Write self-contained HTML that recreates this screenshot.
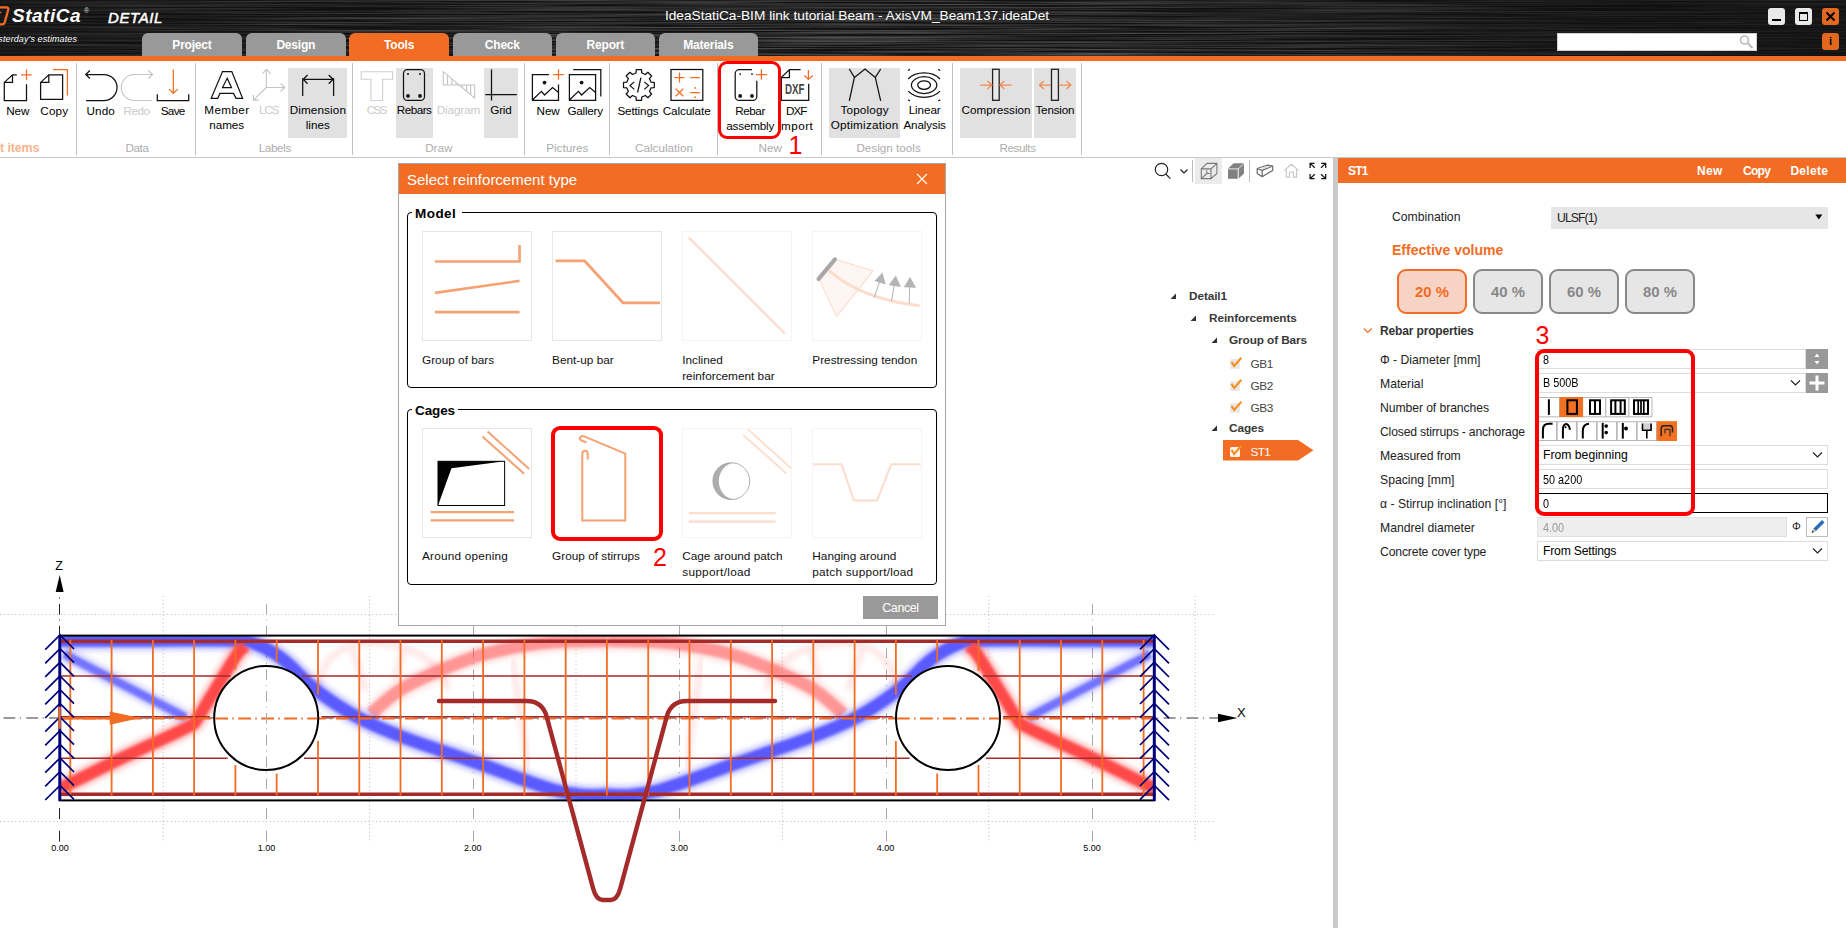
<!DOCTYPE html>
<html lang="en">
<head>
<meta charset="utf-8">
<title>IDEA StatiCa Detail</title>
<style>
*{box-sizing:border-box;margin:0;padding:0}
html,body{width:1846px;height:928px;overflow:hidden;background:#fff}
body{font-family:"Liberation Sans",sans-serif;font-size:12px;color:#000;position:relative}
.abs{position:absolute}
#titlebar{position:absolute;left:0;top:0;width:1846px;height:56px;background:#0c0c0c;overflow:hidden}
#ostripe{position:absolute;left:0;top:56px;width:1846px;height:5px;background:#f26c23}
.tab{position:absolute;top:33px;height:23px;width:99.6px;background:#999;color:#fff;border-radius:6px 6px 0 0;
 font-weight:bold;font-size:12px;text-align:center;line-height:24px;letter-spacing:-0.2px}
.tab.act{background:#f26c23}
#ribbon{position:absolute;left:0;top:61px;width:1846px;height:97px;background:#fff;border-bottom:1px solid #c8c8c8}
.sep{position:absolute;top:63px;width:1px;height:92px;background:#c0c0c0}
.glab{position:absolute;top:140px;font-size:12px;color:#a9a9a9;text-align:center;white-space:nowrap;transform:translateX(-50%)}
.rb{position:absolute;top:68px;height:70px;text-align:center;font-size:12px;line-height:15px;white-space:nowrap}
.rb.hl{background:#e2e2e2}
.rb span{position:absolute;left:50%;transform:translateX(-50%);top:34px}
.rb.dis span{color:#c9c9c9}
.rb svg{position:absolute;left:0;top:0;overflow:visible}
.rl{position:absolute;transform:translateX(-50%);text-align:center;font-size:11.7px;line-height:15.2px;white-space:nowrap;color:#000}
.rl.dis{color:#cacaca}
.gl{position:absolute;top:141px;transform:translateX(-50%);font-size:11.7px;color:#adadad;white-space:nowrap;line-height:14px}
.tb{position:absolute;margin-top:1px;font-weight:bold;font-size:11.8px;line-height:15px;white-space:nowrap;color:#383838;letter-spacing:-0.1px}
.tn{position:absolute;margin-top:1px;font-size:11.8px;line-height:15px;white-space:nowrap;color:#444}
.dl{position:absolute;font-size:11.8px;line-height:16px;white-space:nowrap;color:#111}
.ph{position:absolute;top:163.5px;font-weight:bold;font-size:12px;line-height:15px;color:#fff;white-space:nowrap}
.pl{position:absolute;font-size:12.2px;line-height:15px;white-space:nowrap;color:#222}
</style>
</head>
<body>
<div id="titlebar"><svg width="1846" height="56" style="position:absolute;left:0;top:0"><defs><filter id="br" x="0" y="0" width="100%" height="100%" color-interpolation-filters="sRGB"><feTurbulence type="fractalNoise" baseFrequency="0.004 0.7" numOctaves="3" seed="7" result="n"/><feColorMatrix in="n" type="matrix" values="0 0 0 0 1  0 0 0 0 1  0 0 0 0 1  0.55 0 0 0 -0.18"/></filter><linearGradient id="tg" x1="0" x2="1" y1="0" y2="0"><stop offset="0" stop-color="#fff" stop-opacity="0.4"/><stop offset="0.1" stop-color="#fff" stop-opacity="0.6"/><stop offset="0.3" stop-color="#fff" stop-opacity="1"/><stop offset="0.62" stop-color="#fff" stop-opacity="1"/><stop offset="0.8" stop-color="#fff" stop-opacity="0.5"/><stop offset="1" stop-color="#fff" stop-opacity="0.3"/></linearGradient><mask id="tm"><rect width="1846" height="56" fill="url(#tg)"/></mask></defs><rect width="1846" height="56" fill="#101010"/><g mask="url(#tm)"><rect width="1846" height="56" fill="#fff" filter="url(#br)"/></g></svg></div>
<div id="ostripe"></div>
<svg class="abs" style="left:0;top:0" width="14" height="30"><path d="M-2 7.4H6.2Q8.9 7.4 8.2 10L4.6 22.6Q4 24.4 2 24.4H-2" stroke="#f26c23" stroke-width="2.3" fill="none"/><path d="M-1 12.5H1.2" stroke="#f26c23" stroke-width="1.5"/></svg>
<div class="abs" style="left:12px;top:5.4px;font:italic bold 19px 'Liberation Sans',sans-serif;color:#fff;white-space:nowrap;letter-spacing:0.5px">StatiCa</div>
<div class="abs" style="left:84px;top:7px;font:7px 'Liberation Sans',sans-serif;color:#ddd">®</div>
<div class="abs" style="left:108px;top:9px;font:italic 15px 'Liberation Sans',sans-serif;color:#fff;letter-spacing:0.6px;-webkit-text-stroke:0.5px #fff">DETAIL</div>
<div class="abs" style="right:1769px;top:34.2px;font:italic 9px 'Liberation Sans',sans-serif;color:#fff;white-space:nowrap;letter-spacing:0.1px">Calculate yesterday's estimates</div>
<div class="abs" style="left:557px;width:600px;top:7.5px;text-align:center;font:13.7px 'Liberation Sans',sans-serif;color:#fff;white-space:nowrap" id="wtitle">IdeaStatiCa-BIM link tutorial Beam - AxisVM_Beam137.ideaDet</div>
<div class="abs" style="left:1768px;top:8px;width:17px;height:17px;background:#e9e9e9;border-radius:3px"><div class="abs" style="left:4px;top:11px;width:9px;height:2px;background:#000"></div></div>
<div class="abs" style="left:1795px;top:8px;width:17px;height:17px;background:#e9e9e9;border-radius:3px"><div class="abs" style="left:4px;top:4px;width:9px;height:9px;border:1px solid #000;border-top-width:2px"></div></div>
<div class="abs" style="left:1822px;top:8px;width:17px;height:17px;background:#e3681f;border-radius:3px"><svg width="17" height="17" style="position:absolute;left:0;top:0"><path d="M4.5 4.5 L12.5 12.5 M12.5 4.5 L4.5 12.5" stroke="#000" stroke-width="2"/></svg></div>
<div class="abs" style="left:1557px;top:33px;width:200px;height:18px;background:#fff;border:1px solid #d0d0d0"><svg width="20" height="18" style="position:absolute;left:179px;top:-1px"><circle cx="7.5" cy="7" r="4" fill="none" stroke="#bbb" stroke-width="1.6"/><path d="M10.5 10 L15.5 15" stroke="#bbb" stroke-width="2"/></svg></div>
<div class="abs" style="left:1822px;top:33px;width:17px;height:17px;background:#e3681f;border-radius:3px;color:#000;font:bold 11px 'Liberation Sans',sans-serif;text-align:center;line-height:17px">i</div>

<div class="tab" style="left:142.2px">Project</div>
<div class="tab" style="left:246.0px">Design</div>
<div class="tab act" style="left:349.3px">Tools</div>
<div class="tab" style="left:452.5px">Check</div>
<div class="tab" style="left:555.5px">Report</div>
<div class="tab" style="left:658.5px">Materials</div>

<div id="ribbon"></div>
<!--RIBBON_START-->
<div class="abs" style="left:288px;top:68px;width:59px;height:70px;background:#e1e1e1"></div>
<div class="abs" style="left:396px;top:68px;width:37px;height:70px;background:#e1e1e1"></div>
<div class="abs" style="left:484px;top:68px;width:34px;height:70px;background:#e1e1e1"></div>
<div class="abs" style="left:829px;top:68px;width:71px;height:70px;background:#e1e1e1"></div>
<div class="abs" style="left:960px;top:68px;width:72px;height:70px;background:#e1e1e1"></div>
<div class="abs" style="left:1034px;top:68px;width:42px;height:70px;background:#e1e1e1"></div>
<div class="sep" style="left:76px"></div>
<div class="sep" style="left:195px"></div>
<div class="sep" style="left:352px"></div>
<div class="sep" style="left:524px"></div>
<div class="sep" style="left:609px"></div>
<div class="sep" style="left:717px"></div>
<div class="sep" style="left:821px"></div>
<div class="sep" style="left:952px"></div>
<div class="sep" style="left:1081px"></div>
<div class="rl" style="left:17.8px;top:103px"><span style="letter-spacing:-0.07px;margin-right:0.07px">New</span></div>
<div class="rl" style="left:54.2px;top:103px"><span style="letter-spacing:0.15px;margin-right:-0.15px">Copy</span></div>
<div class="rl" style="left:100.6px;top:103px"><span style="letter-spacing:0.15px;margin-right:-0.15px">Undo</span></div>
<div class="rl dis" style="left:136.7px;top:103px"><span style="letter-spacing:-0.45px;margin-right:0.45px">Redo</span></div>
<div class="rl" style="left:173.0px;top:103px"><span style="letter-spacing:-0.70px;margin-right:0.70px">Save</span></div>
<div class="rl" style="left:226.7px;top:102px"><span style="letter-spacing:0.37px;margin-right:-0.37px">Member</span><br><span style="letter-spacing:0.00px;margin-right:-0.00px">names</span></div>
<div class="rl dis" style="left:269.2px;top:102px"><span style="letter-spacing:-1.23px;margin-right:1.23px">LCS</span></div>
<div class="rl" style="left:317.8px;top:102px"><span style="letter-spacing:0.13px;margin-right:-0.13px">Dimension</span><br><span style="letter-spacing:0.00px;margin-right:-0.00px">lines</span></div>
<div class="rl dis" style="left:377.0px;top:102px"><span style="letter-spacing:-1.73px;margin-right:1.73px">CSS</span></div>
<div class="rl" style="left:414.3px;top:102px"><span style="letter-spacing:-0.50px;margin-right:0.50px">Rebars</span></div>
<div class="rl dis" style="left:458.5px;top:102px"><span style="letter-spacing:-0.09px;margin-right:0.09px">Diagram</span></div>
<div class="rl" style="left:501.0px;top:102px"><span style="letter-spacing:-0.20px;margin-right:0.20px">Grid</span></div>
<div class="rl" style="left:548.2px;top:103px"><span style="letter-spacing:-0.07px;margin-right:0.07px">New</span></div>
<div class="rl" style="left:585.3px;top:103px"><span style="letter-spacing:-0.24px;margin-right:0.24px">Gallery</span></div>
<div class="rl" style="left:638.0px;top:103px"><span style="letter-spacing:-0.14px;margin-right:0.14px">Settings</span></div>
<div class="rl" style="left:686.7px;top:103px"><span style="letter-spacing:-0.09px;margin-right:0.09px">Calculate</span></div>
<div class="rl" style="left:750.3px;top:103px"><span style="letter-spacing:-0.46px;margin-right:0.46px">Rebar</span><br><span style="letter-spacing:-0.17px;margin-right:0.17px">assembly</span></div>
<div class="rl" style="left:796.7px;top:103px"><span style="letter-spacing:-1.07px;margin-right:1.07px">DXF</span><br><span style="letter-spacing:0.47px;margin-right:-0.47px;position:relative;left:-1.6px">Import</span></div>
<div class="rl" style="left:864.5px;top:102px"><span style="letter-spacing:0.18px;margin-right:-0.18px">Topology</span><br><span style="letter-spacing:0.25px;margin-right:-0.25px">Optimization</span></div>
<div class="rl" style="left:924.7px;top:102px"><span style="letter-spacing:-0.10px;margin-right:0.10px">Linear</span><br><span style="letter-spacing:-0.15px;margin-right:0.15px">Analysis</span></div>
<div class="rl" style="left:996.0px;top:102px"><span style="letter-spacing:0.02px;margin-right:-0.02px">Compression</span></div>
<div class="rl" style="left:1055.0px;top:102px"><span style="letter-spacing:-0.20px;margin-right:0.20px">Tension</span></div>
<div class="gl" style="left:137.0px;letter-spacing:-0.40px">Data</div>
<div class="gl" style="left:274.8px;letter-spacing:-0.35px">Labels</div>
<div class="gl" style="left:438.8px;letter-spacing:0.00px">Draw</div>
<div class="gl" style="left:567.3px;letter-spacing:0.00px">Pictures</div>
<div class="gl" style="left:664.0px;letter-spacing:0.00px">Calculation</div>
<div class="gl" style="left:770.3px;letter-spacing:0.00px">New</div>
<div class="gl" style="left:888.6px;letter-spacing:0.00px">Design tools</div>
<div class="gl" style="left:1017.5px;letter-spacing:-0.40px">Results</div>
<div class="abs" style="right:1806.7px;top:140.6px;font-size:12.4px;color:#f7b48d;white-space:nowrap;font-weight:bold;letter-spacing:-0.1px">Project items</div>
<svg class="abs" style="left:0;top:0" width="1100" height="160" viewBox="0 0 1100 160">
<path d="M16.8 74.8H12.5L4.3 82.4V100.5H26.5V84.2M12.5 74.8V82.4H4.3" stroke="#111" stroke-width="1.25" fill="none"/>
<path d="M21.1 74.8H31.7M26.5 69.4V79.9" stroke="#f26c23" stroke-width="1.25" fill="none"/>
<path d="M48.8 74.8H62.6V99.4H40.6V82.4ZM48.8 74.8V82.4H40.6" stroke="#111" stroke-width="1.25" fill="none"/>
<path d="M53.1 69.6H67.4V95.6" stroke="#f26c23" stroke-width="1.25" fill="none"/>
<path d="M85.8 74.5H104A13 13 0 0 1 104 100.5H86.1M89.9 70.5L85.8 74.5L89.9 78.5" stroke="#111" stroke-width="1.25" fill="none"/>
<path d="M152.6 74.5H134.3A13 13 0 0 0 134.3 100.5H151.7M148.4 70.5L152.6 74.5L148.4 78.5" stroke="#c4c4c4" stroke-width="1.1" fill="none"/>
<path d="M173.3 69.4V93.2M169 89.1L173.3 93.4L177.7 89.1" stroke="#f26c23" stroke-width="1.25" fill="none"/>
<path d="M157.3 94.3V100.5H188.7V94.3" stroke="#111" stroke-width="1.25" fill="none"/>
<path d="M222.5 71.5H231.8L242.6 98.3H236.1L233.4 93.4H220L217.7 98.3H211.2ZM227.2 78.3L231.5 87.5H222.5Z" stroke="#111" stroke-width="1.25" fill="none"/>
<path d="M266.4 69.4V87.5H284.8M266.4 87.5L253.4 100.1M262.4 73.7L266.4 69.4L270.8 73.7M280.5 83.3L284.8 87.5L280.5 91.6M253.4 95V100.1H258.8" stroke="#c4c4c4" stroke-width="1.1" fill="none"/>
<path d="M302.7 78.3V96.1M333.6 78.3V96.1M302.7 79.3H333.6M307.6 75L303.2 79.3L307.6 83.7M328.7 75L333.1 79.3L328.7 83.7" stroke="#111" stroke-width="1.25" fill="none"/>
<path d="M361.2 71.8H392.6V79.3H382.6V100.5H371V79.3H361.2Z" stroke="#cfcfcf" stroke-width="1.1" fill="none"/>
<rect x="403.5" y="69.5" width="21" height="30.9" rx="4" stroke="#111" stroke-width="1.25" fill="none"/>
<circle cx="408" cy="74.1" r="1" fill="#111"/><circle cx="420" cy="74.1" r="1" fill="#111"/><circle cx="408" cy="95.9" r="1.9" fill="#111"/><circle cx="420" cy="95.9" r="1.9" fill="#111"/>
<path d="M443.3 71.7V85H474.7V98.1ZM447.5 75.3V85M451.8 78.9V85M456 82.5V85M462.5 85V88M466.6 85V91.3M470.7 85V94.7" stroke="#c4c4c4" stroke-width="1.1" fill="none"/>
<path d="M491.5 69.5V100.6M485.3 94.6H516.8" stroke="#111" stroke-width="1.25" fill="none"/>
<path d="M548.9 74.5H532.4V100.3H558.5V84.4M532.4 100L541.4 91.3L544.5 95L552.6 87.5L558.5 92.5" stroke="#111" stroke-width="1.25" fill="none"/>
<circle cx="544.5" cy="82.6" r="1.9" fill="#111"/>
<path d="M553.2 74.5H563.8M558.5 69.2V79.8" stroke="#f26c23" stroke-width="1.25" fill="none"/>
<path d="M569.4 74.5H595.6V100.3H569.4ZM569.4 100L578.4 91.3L581.6 95L589.7 87.5L595.6 92.5M573.2 69.5H600.8V96.6" stroke="#111" stroke-width="1.25" fill="none"/>
<circle cx="581.6" cy="82.6" r="1.9" fill="#111"/>
<path d="M636.0 73.0L636.3 69.6L641.5 69.6L641.8 73.0L645.3 74.5L647.9 72.3L651.6 76.0L649.4 78.6L650.9 82.1L654.3 82.4L654.3 87.6L650.9 87.9L649.4 91.4L651.6 94.0L647.9 97.7L645.3 95.5L641.8 97.0L641.5 100.4L636.3 100.4L636.0 97.0L632.5 95.5L629.9 97.7L626.2 94.0L628.4 91.4L626.9 87.9L623.5 87.6L623.5 82.4L626.9 82.1L628.4 78.6L626.2 76.0L629.9 72.3L632.5 74.5Z" stroke-linejoin="round" stroke="#111" stroke-width="1.25" fill="none"/>
<path d="M634.3 81.9L630 85.6L634.3 89.4M640.9 77.6L637.6 92.5M644.3 81.9L648.6 85.6L644.3 89.4" stroke="#111" stroke-width="1.25" fill="none"/>
<rect x="671" y="69.5" width="31.8" height="30.9" stroke="#111" stroke-width="1.25" fill="none"/>
<path d="M674.5 77.6H684.5M679.5 72.6V82.6M690.3 77.6H699.9M675.7 88.7L683.3 96.3M683.3 88.7L675.7 96.3M690.3 92.5H699.9" stroke="#f26c23" stroke-width="1.25" fill="none"/>
<circle cx="695.1" cy="87.9" r="0.9" fill="#f26c23"/><circle cx="695.1" cy="97.2" r="0.9" fill="#f26c23"/>
<path d="M752 69.7H739.2A4 4 0 0 0 735.2 73.7V96.4A4 4 0 0 0 739.2 100.4H752.8A4 4 0 0 0 756.8 96.4V80.7" stroke="#111" stroke-width="1.25" fill="none"/>
<circle cx="740.2" cy="74.1" r="0.9" fill="#111"/><circle cx="752" cy="74.1" r="0.9" fill="#111"/><circle cx="740.2" cy="95.9" r="1.9" fill="#111"/><circle cx="752" cy="95.9" r="1.9" fill="#111"/>
<path d="M756 74.5H767M761.4 69.2V79.8" stroke="#f26c23" stroke-width="1.25" fill="none"/>
<path d="M800.6 69.5H789.4L781.3 77.6V100.4H808.7V83.8M789.4 69.5V77.6H781.3" stroke="#111" stroke-width="1.25" fill="none"/>
<path d="M808.4 70.1V79.2M804.4 75.5L808.4 79.4L812.8 75.5" stroke="#f26c23" stroke-width="1.25" fill="none"/>
<text x="785" y="93.8" font-family="Liberation Sans, sans-serif" font-weight="bold" font-size="14" fill="#484848" textLength="19.5" lengthAdjust="spacingAndGlyphs">DXF</text>
<path d="M849.3 69L854.4 77.4L849.3 100.8M854.4 77.4L865 69L875.3 77.4M880.7 69L875.3 77.4L880.7 100.8" stroke="#111" stroke-width="1.25" fill="none"/>
<ellipse cx="924.1" cy="85.1" rx="6.4" ry="4.3" stroke="#111" stroke-width="1.25" fill="none"/><ellipse cx="924.1" cy="85.1" rx="12.7" ry="8.4" stroke="#111" stroke-width="1.25" fill="none"/>
<path d="M908.2 79A19 13.5 0 0 1 940 79M908.2 91.2A19 13.5 0 0 0 940 91.2M908 70.5L910 69.2M940.2 70.5L938.2 69.2M908 99.8L910 101M940.2 99.8L938.2 101" stroke="#111" stroke-width="1.25" fill="none"/>
<rect x="992.6" y="69.3" width="6.6" height="31" fill="#e8e8e8" stroke="#222" stroke-width="1.3"/>
<path d="M980.2 85H991.7M987.5 81L991.9 85L987.5 89M1011.6 85H1000.2M1004.3 81L999.9 85L1004.3 89" stroke="#f58a50" stroke-width="1.25" fill="none"/>
<rect x="1051.5" y="69.3" width="6.9" height="31" fill="#e8e8e8" stroke="#222" stroke-width="1.3"/>
<path d="M1051 85H1039.6M1043.8 81L1039.4 85L1043.8 89M1058.8 85H1070.6M1066.5 81L1070.8 85L1066.5 89" stroke="#f58a50" stroke-width="1.25" fill="none"/>
</svg>
<div class="abs" style="left:718px;top:61px;width:63px;height:78px;border:3.7px solid #f00;border-radius:9px"></div>
<div class="abs" style="left:788.5px;top:131px;font-size:25px;color:#f00;line-height:28px">1</div>
<!--RIBBON_END-->
<!--MAIN_START-->
<div class="abs" style="left:1332.6px;top:158px;width:5.4px;height:770px;background:#c9c9c9"></div>
<div class="abs" style="left:1195px;top:158px;width:27px;height:26px;background:#ebebeb"></div>
<div class="abs" style="left:1192px;top:160px;width:1px;height:22px;background:#bdbdbd"></div>
<div class="abs" style="left:1249px;top:160px;width:1px;height:22px;background:#bdbdbd"></div>
<svg class="abs" style="left:1140px;top:158px" width="193" height="30" viewBox="1140 158 193 30">
<circle cx="1161.5" cy="169.5" r="6.2" stroke="#222" stroke-width="1.2" fill="none"/><path d="M1165.8 174L1170.3 178.6" stroke="#222" stroke-width="1.2" fill="none"/>
<path d="M1180.5 169.5L1184 173L1187.5 169.5" stroke="#222" stroke-width="1.2" fill="none"/>
<path d="M1201.3 168.9H1211V178.6H1201.3ZM1206.8 163.4H1216.9V173.5M1206.8 170.2V173.5H1209.8M1201.3 168.9L1206.8 163.4M1211 168.9L1216.9 163.4M1211 178.6L1216.9 173.5M1201.3 178.6L1206.8 173.5M1206.8 171V173.5H1209.5" stroke="#777" stroke-width="1.1" fill="none"/>
<path d="M1228 169.3H1237.7V178.8H1228Z" fill="#808080"/><path d="M1228 168.5L1233.7 163.2H1243.8L1238.3 168.5Z" fill="#808080"/><path d="M1238.7 168.9L1244 163.8V173.5L1238.7 178.6Z" fill="#808080"/>
<path d="M1257.2 168.5L1262.2 170.4V176.7L1257.2 173.6ZM1257.2 168.5L1267.2 165.2L1272.7 166L1262.2 170.4M1272.7 166V170.4L1262.2 176.7" stroke="#6a6a6a" stroke-width="1.2" fill="none" stroke-linejoin="round"/><path d="M1261 167.8L1268 166L1271 166.4L1263.3 168.9Z" fill="#ddd"/>
<path d="M1284.4 170.4L1291.4 164.4L1298.6 170.4M1286.3 169.7V177.1H1289.5V172H1293.4V177.1H1296.5V169.7" stroke="#c6c6c6" stroke-width="1.2" fill="none"/>
<path d="M1310.1 167.9V163.4H1314.6M1310.1 163.4L1314.8 167.7M1321.2 163.4H1325.7V167.9M1325.7 163.4L1321 167.7M1310.1 174.1V178.6H1314.6M1310.1 178.6L1314.8 174.3M1321.2 178.6H1325.7V174.1M1325.7 178.6L1321 174.3" stroke="#111" stroke-width="1.25" fill="none"/>
</svg>
<!--MAIN_END-->
<!--BEAM_START-->
<svg class="abs" style="left:0;top:158px" width="1333" height="770" viewBox="0 158 1333 770">
<defs><filter id="bl" x="-5%" y="-20%" width="110%" height="140%"><feGaussianBlur stdDeviation="1.4"/></filter><filter id="bl2" x="-5%" y="-20%" width="110%" height="140%"><feGaussianBlur stdDeviation="2.6"/></filter><clipPath id="h1"><circle cx="266.2" cy="718" r="51"/></clipPath><clipPath id="bc"><rect x="60" y="636" width="1094" height="164"/></clipPath></defs>
<path d="M0 614.5H1214M0 821.5H1214" stroke="#b8b8b8" stroke-width="1" stroke-dasharray="1 2.8" fill="none"/>
<path d="M163.2 596V842M369.6 596V842M576.0 596V842M782.4 596V842M988.8 596V842M1195.2 596V842" stroke="#b8b8b8" stroke-width="1" stroke-dasharray="1 2.8" fill="none"/>
<path d="M266.5 604V800M473.5 604V800M679.5 604V800M886.5 604V800M1092.5 604V800" stroke="#a8a8a8" stroke-width="1" stroke-dasharray="10.6 5 1 5.2" fill="none"/>
<path d="M266.5 808V819M266.5 830.7V841.7M473.5 808V819M473.5 830.7V841.7M679.5 808V819M679.5 830.7V841.7M886.5 808V819M886.5 830.7V841.7M1092.5 808V819M1092.5 830.7V841.7" stroke="#a8a8a8" stroke-width="1" fill="none"/>
<path d="M59.5 604V636" stroke="#222" stroke-width="1" stroke-dasharray="10.6 5 1 5.2" fill="none"/><path d="M59.5 597.5V598.7M59.5 808V819M59.5 830.7V841.7" stroke="#222" stroke-width="1" fill="none"/>
<path d="M-19.25 718H1219" stroke="#9b9b9b" stroke-width="1.8" stroke-dasharray="11.8 4.6 1 5.35" fill="none"/>
<g clip-path="url(#bc)"><g id="hl"><path d="M318 690C322 655 345 642 375 643C410 644 440 660 448 690M352 648L366 690M404 646L395 680" stroke="#ff4a4a" stroke-width="7" fill="none" opacity="0.13" filter="url(#bl2)" stroke-linejoin="round" stroke-linecap="butt"/>
<path d="M512.6 659L528.5 768.5" stroke="#ff4a4a" stroke-width="7" fill="none" opacity="0.13" filter="url(#bl2)" stroke-linejoin="round" stroke-linecap="butt"/>
<path d="M371.0 714.0C375.8 710.0 388.2 697.4 400.0 690.0C411.8 682.6 428.2 675.5 442.0 669.6C455.8 663.7 468.9 658.5 482.6 654.5C496.3 650.5 511.1 647.9 524.0 645.7C536.9 643.5 546.2 642.4 560.0 641.5C573.8 640.6 599.2 640.7 607.0 640.5" stroke="#ff4a4a" stroke-width="20.5" fill="none" opacity="0.15" filter="url(#bl2)" stroke-linejoin="round" stroke-linecap="butt"/>
<path d="M371.0 714.0C375.8 710.0 388.2 697.4 400.0 690.0C411.8 682.6 428.2 675.5 442.0 669.6C455.8 663.7 468.9 658.5 482.6 654.5C496.3 650.5 511.1 647.9 524.0 645.7C536.9 643.5 546.2 642.4 560.0 641.5C573.8 640.6 599.2 640.7 607.0 640.5" stroke="#ff4a4a" stroke-width="12.5" fill="none" opacity="0.5" filter="url(#bl)" stroke-linejoin="round" stroke-linecap="butt"/>
<path d="M60.0 640.5C75.0 640.5 120.7 640.5 150.0 640.5C179.3 640.5 218.3 639.9 236.0 640.5C253.7 641.1 249.2 641.6 256.0 644.0C262.8 646.4 271.3 651.4 277.0 655.0C282.7 658.6 283.2 659.4 290.0 665.5C296.8 671.6 306.5 682.8 318.0 691.5C329.5 700.2 345.3 710.6 359.0 718.0C372.7 725.4 386.2 730.5 400.0 736.0C413.8 741.5 428.2 746.2 442.0 751.0C455.8 755.8 469.3 760.2 483.0 765.0C496.7 769.8 511.5 775.7 524.0 780.0C536.5 784.3 548.2 788.5 558.0 791.0C567.8 793.5 574.7 794.3 583.0 795.0C591.3 795.7 603.8 795.0 608.0 795.0" stroke="#5a5aff" stroke-width="20.5" fill="none" opacity="0.3" filter="url(#bl2)" stroke-linejoin="round" stroke-linecap="butt"/>
<path d="M60.0 640.5C75.0 640.5 120.7 640.5 150.0 640.5C179.3 640.5 218.3 639.9 236.0 640.5C253.7 641.1 249.2 641.6 256.0 644.0C262.8 646.4 271.3 651.4 277.0 655.0C282.7 658.6 283.2 659.4 290.0 665.5C296.8 671.6 306.5 682.8 318.0 691.5C329.5 700.2 345.3 710.6 359.0 718.0C372.7 725.4 386.2 730.5 400.0 736.0C413.8 741.5 428.2 746.2 442.0 751.0C455.8 755.8 469.3 760.2 483.0 765.0C496.7 769.8 511.5 775.7 524.0 780.0C536.5 784.3 548.2 788.5 558.0 791.0C567.8 793.5 574.7 794.3 583.0 795.0C591.3 795.7 603.8 795.0 608.0 795.0" stroke="#5a5aff" stroke-width="12.5" fill="none" opacity="1" filter="url(#bl)" stroke-linejoin="round" stroke-linecap="butt"/>
<path d="M64 654L186 717.5" stroke="#5a5aff" stroke-width="16.5" fill="none" opacity="0.24" filter="url(#bl2)" stroke-linejoin="round" stroke-linecap="butt"/>
<path d="M64 654L186 717.5" stroke="#5a5aff" stroke-width="8.5" fill="none" opacity="0.8" filter="url(#bl)" stroke-linejoin="round" stroke-linecap="butt"/>
<path d="M171 720H186" stroke="#5a5aff" stroke-width="6" fill="none" opacity="0.6" filter="url(#bl)" stroke-linejoin="round" stroke-linecap="butt"/>
<path d="M60.0 788.5C70.0 783.6 99.0 769.1 120.0 759.0C141.0 748.9 173.2 734.7 186.0 728.0C198.8 721.3 193.0 724.0 197.0 719.0C201.0 714.0 203.5 708.5 210.0 698.0C216.5 687.5 230.2 664.7 236.0 656.0C241.8 647.3 243.5 647.7 245.0 646.0" stroke="#ff4a4a" stroke-width="20" fill="none" opacity="0.3" filter="url(#bl2)" stroke-linejoin="round" stroke-linecap="butt"/>
<path d="M60.0 788.5C70.0 783.6 99.0 769.1 120.0 759.0C141.0 748.9 173.2 734.7 186.0 728.0C198.8 721.3 193.0 724.0 197.0 719.0C201.0 714.0 203.5 708.5 210.0 698.0C216.5 687.5 230.2 664.7 236.0 656.0C241.8 647.3 243.5 647.7 245.0 646.0" stroke="#ff4a4a" stroke-width="12" fill="none" opacity="1" filter="url(#bl)" stroke-linejoin="round" stroke-linecap="butt"/>
<path d="M236 650H250" stroke="#ff4a4a" stroke-width="8" fill="none" opacity="0.9" filter="url(#bl)" stroke-linejoin="round" stroke-linecap="butt"/></g><use href="#hl" transform="translate(1214.3,0) scale(-1,1)"/></g>
<rect x="60" y="635.6" width="1094" height="164.8" fill="none" stroke="#000" stroke-width="2"/>
<path d="M60 641.3H1154M60 794.3H1154" stroke="#a52a2a" stroke-width="3.4" fill="none"/>
<path d="M60 676H230.4M302 676H912M983 676H1154M60 716.7H209.8M321.4 716.7H892.7M1003 716.7H1154M60 758.2H227.6M304 758.2H909.6M985.8 758.2H1154" stroke="#a52a2a" stroke-width="1.6" fill="none"/>
<path d="M70.3 639.8V795.6M111.6 639.8V795.6M152.9 639.8V795.6M194.1 639.8V795.6M235.4 639.8V669.4M235.4 765.0V795.6M276.7 639.8V662.0M276.7 773.4V795.6M318.0 639.8V694.8M318.0 741.0V795.6M359.3 639.8V795.6M400.5 639.8V795.6M441.8 639.8V795.6M483.1 639.8V795.6M524.4 639.8V795.6M565.7 639.8V795.6M606.9 639.8V795.6M648.2 639.8V795.6M689.5 639.8V795.6M730.8 639.8V795.6M772.1 639.8V795.6M813.3 639.8V795.6M854.6 639.8V795.6M895.9 639.8V694.8M895.9 741.0V795.6M937.2 639.8V662.0M937.2 773.4V795.6M978.5 639.8V671.0M978.5 765.0V795.6M1019.7 639.8V795.6M1061.0 639.8V795.6M1102.3 639.8V795.6M1143.6 639.8V795.6" stroke="#f26c23" stroke-width="1.8" fill="none"/>
<path d="M60 718.4H1154" stroke="#f26c23" stroke-width="2" stroke-dasharray="12.8 4.3 1.5 4.4" fill="none"/>
<path d="M60 718.4H112" stroke="#f26c23" stroke-width="2.2"/>
<path d="M109.7 711.4L140.5 718L109.7 724.7Z" fill="#f26c23"/>
<circle cx="266.2" cy="718.0" r="52" fill="#fff" stroke="#000" stroke-width="2"/>
<path d="M215.2 718.4H317.2" stroke="#f26c23" stroke-width="2" stroke-dasharray="12.8 4.3 1.5 4.4"/>
<path d="M266.5 604V842" stroke="#a8a8a8" stroke-width="1" stroke-dasharray="10.6 5 1 5.2" fill="none" clip-path="url(#h1)"/>
<circle cx="948.0" cy="718.0" r="52" fill="#fff" stroke="#000" stroke-width="2"/>
<path d="M897.0 718.4H999.0" stroke="#f26c23" stroke-width="2" stroke-dasharray="12.8 4.3 1.5 4.4"/>
<path d="M439 701H526.4Q542.4 701 546.6 716.4L593.1 888.4Q596.2 900 602.5 900H610.9Q617.2 900 620.3 888.4L666.8 716.4Q671 701 687 701H775" stroke="#a52a2a" stroke-width="4.4" fill="none" stroke-linecap="round" stroke-linejoin="round"/>
<g clip-path="url(#sc)"><path d="M45.2 649.6L60 635.0L74 649.0M1140 649.3L1154.3 635.0L1169 649.7M45.2 663.3L60 648.7L74 662.7M1140 663.0L1154.3 648.7L1169 663.4M45.2 676.9L60 662.3L74 676.3M1140 676.6L1154.3 662.3L1169 677.0M45.2 690.6L60 676.0L74 690.0M1140 690.3L1154.3 676.0L1169 690.7M45.2 704.3L60 689.7L74 703.7M1140 704.0L1154.3 689.7L1169 704.4M45.2 718.0L60 703.4L74 717.4M1140 717.6L1154.3 703.4L1169 718.1M45.2 731.6L60 717.0L74 731.0M1140 731.3L1154.3 717.0L1169 731.7M45.2 745.3L60 730.7L74 744.7M1140 745.0L1154.3 730.7L1169 745.4M45.2 759.0L60 744.4L74 758.4M1140 758.7L1154.3 744.4L1169 759.1M45.2 772.6L60 758.0L74 772.0M1140 772.3L1154.3 758.0L1169 772.7M45.2 786.3L60 771.7L74 785.7M1140 786.0L1154.3 771.7L1169 786.4M45.2 800.0L60 785.4L74 799.4M1140 799.7L1154.3 785.4L1169 800.1" stroke="#00007a" stroke-width="1.7" fill="none"/></g>
<path d="M59.8 635V801M1154.3 635V801" stroke="#00007a" stroke-width="3" fill="none"/>
<path d="M59.6 706.7V728.9" stroke="#f26c23" stroke-width="2.4" fill="none"/>
<path d="M59.7 575L55.7 592H63.6Z" fill="#000"/>
<path d="M1237.5 718L1218 713.7V722.3Z" fill="#000"/>
<text x="55.3" y="570.2" font-family="Liberation Sans, sans-serif" font-size="12.5" fill="#000">Z</text>
<text x="1237" y="717.3" font-family="Liberation Sans, sans-serif" font-size="13" fill="#000">X</text>
<text x="60.0" y="851" text-anchor="middle" font-family="Liberation Sans, sans-serif" font-size="9" fill="#000">0.00</text>
<text x="266.4" y="851" text-anchor="middle" font-family="Liberation Sans, sans-serif" font-size="9" fill="#000">1.00</text>
<text x="472.8" y="851" text-anchor="middle" font-family="Liberation Sans, sans-serif" font-size="9" fill="#000">2.00</text>
<text x="679.2" y="851" text-anchor="middle" font-family="Liberation Sans, sans-serif" font-size="9" fill="#000">3.00</text>
<text x="885.6" y="851" text-anchor="middle" font-family="Liberation Sans, sans-serif" font-size="9" fill="#000">4.00</text>
<text x="1092.0" y="851" text-anchor="middle" font-family="Liberation Sans, sans-serif" font-size="9" fill="#000">5.00</text>
</svg>
<!--BEAM_END-->
<!--TREE_START-->
<svg class="abs" style="left:1170.0px;top:293.0px" width="7" height="7"><path d="M6 0.5V6H0.5Z" fill="#333"/></svg><div class="tb" style="left:1189px;top:288px">Detail1</div>
<svg class="abs" style="left:1190.0px;top:315.0px" width="7" height="7"><path d="M6 0.5V6H0.5Z" fill="#333"/></svg><div class="tb" style="left:1209px;top:310px">Reinforcements</div>
<svg class="abs" style="left:1210.5px;top:337.0px" width="7" height="7"><path d="M6 0.5V6H0.5Z" fill="#333"/></svg><div class="tb" style="left:1229px;top:332px">Group of Bars</div>
<div class="abs" style="left:1229.6px;top:358.9px;width:10px;height:10px;background:#e9e9e9;border-radius:1.5px"></div><svg class="abs" style="left:1229.0px;top:355.4px" width="16" height="16"><path d="M2.5 6.9L5.2 11L12.3 2.8" stroke="#f7901e" stroke-width="2.1" fill="none"/></svg><div class="tn" style="left:1250.5px;top:356px;letter-spacing:-0.45px">GB1</div>
<div class="abs" style="left:1229.6px;top:380.9px;width:10px;height:10px;background:#e9e9e9;border-radius:1.5px"></div><svg class="abs" style="left:1229.0px;top:377.4px" width="16" height="16"><path d="M2.5 6.9L5.2 11L12.3 2.8" stroke="#f7901e" stroke-width="2.1" fill="none"/></svg><div class="tn" style="left:1250.5px;top:378px;letter-spacing:-0.45px">GB2</div>
<div class="abs" style="left:1229.6px;top:402.9px;width:10px;height:10px;background:#e9e9e9;border-radius:1.5px"></div><svg class="abs" style="left:1229.0px;top:399.4px" width="16" height="16"><path d="M2.5 6.9L5.2 11L12.3 2.8" stroke="#f7901e" stroke-width="2.1" fill="none"/></svg><div class="tn" style="left:1250.5px;top:400px;letter-spacing:-0.45px">GB3</div>
<svg class="abs" style="left:1210.5px;top:425.0px" width="7" height="7"><path d="M6 0.5V6H0.5Z" fill="#333"/></svg><div class="tb" style="left:1229px;top:420px">Cages</div>
<svg class="abs" style="left:1223px;top:440px" width="92" height="21"><path d="M0 0H75L90.5 10.3L75 20.6H0Z" fill="#f26c23"/></svg>
<div class="abs" style="left:1229.6px;top:446.9px;width:10px;height:10px;background:#fdf3ec;border-radius:1.5px"></div><svg class="abs" style="left:1229.0px;top:443.4px" width="16" height="16"><path d="M2.5 6.9L5.2 11L12.3 2.8" stroke="#f7901e" stroke-width="2.1" fill="none"/></svg><div class="tn" style="left:1250.5px;top:444px;color:#fff;letter-spacing:-0.7px">ST1</div>
<!--TREE_END-->
<!--DIALOG_START-->
<div class="abs" style="left:398px;top:163px;width:548px;height:463px;background:#fff;border:1px solid #a6a6a6"></div>
<div class="abs" style="left:399px;top:164px;width:546px;height:30px;background:#f26c23"></div>
<div class="abs" style="left:407px;top:170.8px;font-size:15px;line-height:18px;color:#fff;white-space:nowrap;letter-spacing:0px" id="dtitle">Select reinforcement type</div>
<svg class="abs" style="left:916px;top:173px" width="12" height="12"><path d="M1 1L11 11M11 1L1 11" stroke="#fff" stroke-width="1.1"/></svg>
<div class="abs" style="left:407px;top:212px;width:530px;height:176px;border:1px solid #000;border-radius:4px"></div><div class="abs" style="left:412px;top:204px;width:50px;height:16px;background:#fff"></div><div class="abs" style="left:415px;top:205.6px;font-weight:bold;font-size:13.5px;line-height:16px;white-space:nowrap;letter-spacing:0.45px">Model</div>
<div class="abs" style="left:407px;top:409px;width:530px;height:176px;border:1px solid #000;border-radius:4px"></div><div class="abs" style="left:412px;top:401px;width:46px;height:16px;background:#fff"></div><div class="abs" style="left:415px;top:402.6px;font-weight:bold;font-size:13.5px;line-height:16px;white-space:nowrap;letter-spacing:-0.1px">Cages</div>
<svg class="abs" style="left:422.3px;top:231.3px" width="110" height="110" viewBox="0 0 109.3 109.3"><rect x="0.5" y="0.5" width="108.3" height="108.3" fill="#fff" stroke="#e6e6e6" stroke-width="1"/><path d="M12.8 30.3H96.9V13.8M12.8 61.5L96.9 49.6M12.8 80.6H96.9" stroke="#f5a273" stroke-width="2.6" fill="none"/></svg>
<svg class="abs" style="left:552.3px;top:231.3px" width="110" height="110" viewBox="0 0 109.3 109.3"><rect x="0.5" y="0.5" width="108.3" height="108.3" fill="#fff" stroke="#e6e6e6" stroke-width="1"/><path d="M3.4 29.6H32.3L70.7 71.5H107.3" stroke="#f5a273" stroke-width="2.7" fill="none" stroke-linejoin="round"/></svg>
<svg class="abs" style="left:682.3px;top:231.3px" width="110" height="110" viewBox="0 0 109.3 109.3"><rect x="0.5" y="0.5" width="108.3" height="108.3" fill="#fff" stroke="#f4f4f4" stroke-width="1"/><path d="M6.8 6.6L102.3 101.8" stroke="#fcdccb" stroke-width="2.2" fill="none"/></svg>
<svg class="abs" style="left:812.3px;top:231.3px" width="110" height="110" viewBox="0 0 109.3 109.3"><rect x="0.5" y="0.5" width="108.3" height="108.3" fill="#fff" stroke="#f4f4f4" stroke-width="1"/><path d="M24.5 28.6L60.8 39.4L24.5 84.9L7.6 49.3Z" fill="#fef6f2" stroke="#fcdccb" stroke-width="1"/><path d="M16.8 39.4Q50 68 106.9 74.2" stroke="#fcdccb" stroke-width="3" fill="none"/><path d="M22.8 28.2L6.5 47.6" stroke="#a8a8a8" stroke-width="4" stroke-linecap="round"/><g stroke="#b4b4b4" stroke-width="1" fill="#b4b4b4"><path d="M61.8 66.2L68 48"/><path d="M63 49.5L72.5 52.5L69.8 42.3Z"/><path d="M79 69.7L82 52"/><path d="M77 53.5L87.5 55L83.2 45.3Z"/><path d="M96.6 71.8L97 53"/><path d="M92 55.5L102.5 55.8L97.4 46.8Z"/></g></svg>
<svg class="abs" style="left:422.3px;top:427.6px" width="110" height="110" viewBox="0 0 109.3 109.3"><rect x="0.5" y="0.5" width="108.3" height="108.3" fill="#fff" stroke="#e6e6e6" stroke-width="1"/><path d="M15.9 33.1H82.1L29.3 40.1L15.9 77Z" fill="#000"/><rect x="15.9" y="33.1" width="66.2" height="43.9" fill="none" stroke="#000" stroke-width="1"/><path d="M65.2 3.5L106.5 40.8M60 8.5L101.5 45.5" stroke="#f5a273" stroke-width="2"/><path d="M8.6 83.5H91.5M8.6 91.7H91.5" stroke="#f5a273" stroke-width="2.3"/></svg>
<svg class="abs" style="left:552.3px;top:427.6px" width="110" height="110" viewBox="0 0 109.3 109.3"><rect x="0.5" y="0.5" width="108.3" height="108.3" fill="#fff" stroke="#e6e6e6" stroke-width="1"/><path d="M34.4 14.1Q26 12.5 28 9.3Q29.3 7.2 32 8.3L72.8 25.4V91.8H30.1V26Q30.2 22.6 32.8 22.6Q35.5 22.6 35.5 26V31.4" stroke="#f5a273" stroke-width="2" fill="none"/></svg>
<svg class="abs" style="left:682.3px;top:427.6px" width="110" height="110" viewBox="0 0 109.3 109.3"><rect x="0.5" y="0.5" width="108.3" height="108.3" fill="#fff" stroke="#f4f4f4" stroke-width="1"/><path d="M65.6 1.4L108.5 40.1M60.6 6.8L103.7 45.1" stroke="#fcdccb" stroke-width="1.8"/><circle cx="49" cy="52.8" r="18.3" fill="#adadad"/><ellipse cx="52" cy="52.8" rx="15.4" ry="17.9" fill="#fff"/><circle cx="49" cy="52.8" r="18.3" fill="none" stroke="#a0a0a0" stroke-width="0.8"/><path d="M6.8 84.6H93M6.8 93.1H93" stroke="#fcdccb" stroke-width="2.2"/></svg>
<svg class="abs" style="left:812.3px;top:427.6px" width="110" height="110" viewBox="0 0 109.3 109.3"><rect x="0.5" y="0.5" width="108.3" height="108.3" fill="#fff" stroke="#f4f4f4" stroke-width="1"/><path d="M1.3 36.1H29.4L41.7 72.1H64.6L78.7 36.1H107.9" stroke="#fcdccb" stroke-width="2" fill="none" stroke-linejoin="round"/></svg>
<div class="dl" style="left:422.0px;top:352.3px">Group of bars</div>
<div class="dl" style="left:552.1px;top:352.3px">Bent-up bar</div>
<div class="dl" style="left:682.2px;top:352.3px">Inclined<br>reinforcement bar</div>
<div class="dl" style="left:812.3px;top:352.3px">Prestressing tendon</div>
<div class="dl" style="left:422.0px;top:548.4px"><span style="letter-spacing:.2px">Around opening</span></div>
<div class="dl" style="left:552.1px;top:548.4px">Group of stirrups</div>
<div class="dl" style="left:682.2px;top:548.4px">Cage around patch<br><span style="letter-spacing:.3px">support/load</span></div>
<div class="dl" style="left:812.3px;top:548.4px">Hanging around<br><span style="letter-spacing:.22px">patch support/load</span></div>
<div class="abs" style="left:551px;top:426px;width:112px;height:115px;border:4px solid #f00;border-radius:9px"></div>
<div class="abs" style="left:653px;top:543px;font-size:25px;color:#f00;line-height:28px">2</div>
<div class="abs" style="left:863px;top:596px;width:75px;height:23px;background:#999;color:#fff;font-size:12.4px;letter-spacing:-0.35px;text-align:center;line-height:24.6px">Cancel</div>
<!--DIALOG_END-->
<!--PANEL_START-->
<div class="abs" style="left:1338px;top:158px;width:508px;height:25px;background:#f26c23"></div>
<div class="ph" style="left:1348px;letter-spacing:-0.8px">ST1</div><div class="ph" style="left:1697px;letter-spacing:0.3px">New</div><div class="ph" style="left:1743px;letter-spacing:-0.7px">Copy</div><div class="ph" style="left:1790.4px;letter-spacing:0.3px">Delete</div>
<div class="pl" style="left:1392px;top:209.6px">Combination</div>
<div class="abs" style="left:1551px;top:207px;width:277px;height:22px;background:#e6e6e6"></div><div class="pl" style="left:1557px;top:211px;letter-spacing:-0.9px">ULSF(1)</div>
<svg class="abs" style="left:1815px;top:214px" width="8" height="6"><path d="M0.3 0.5H7.3L3.8 5.5Z" fill="#000"/></svg>
<div class="abs" style="left:1392px;top:240.6px;font-weight:bold;font-size:14px;line-height:18px;color:#f26c23;white-space:nowrap">Effective volume</div>
<div class="abs" style="left:1397px;top:269px;width:70px;height:45px;border-radius:9px;border:2px solid #f26c23;background:#f6d3c4;color:#f26c23;font-weight:bold;font-size:14.9px;text-align:center;line-height:42.6px;white-space:nowrap">20 %</div>
<div class="abs" style="left:1473px;top:269px;width:70px;height:45px;border-radius:9px;border:2px solid #888;background:#e6e6e6;color:#888;font-weight:bold;font-size:14.9px;text-align:center;line-height:42.6px;white-space:nowrap">40 %</div>
<div class="abs" style="left:1549px;top:269px;width:70px;height:45px;border-radius:9px;border:2px solid #888;background:#e6e6e6;color:#888;font-weight:bold;font-size:14.9px;text-align:center;line-height:42.6px;white-space:nowrap">60 %</div>
<div class="abs" style="left:1625px;top:269px;width:70px;height:45px;border-radius:9px;border:2px solid #888;background:#e6e6e6;color:#888;font-weight:bold;font-size:14.9px;text-align:center;line-height:42.6px;white-space:nowrap">80 %</div>
<svg class="abs" style="left:1363px;top:327px" width="10" height="8"><path d="M0.8 1.5L4.8 5.5L8.8 1.5" stroke="#f26c23" stroke-width="1.1" fill="none"/></svg>
<div class="abs" style="left:1380px;top:323px;font-weight:bold;font-size:12px;line-height:16px;color:#333;white-space:nowrap;letter-spacing:-0.15px">Rebar properties</div>
<div class="pl" style="left:1380px;top:352.5px;letter-spacing:0.00px">Φ - Diameter [mm]</div>
<div class="pl" style="left:1380px;top:376.5px;letter-spacing:0.00px">Material</div>
<div class="pl" style="left:1380px;top:400.5px;letter-spacing:-0.08px">Number of branches</div>
<div class="pl" style="left:1380px;top:424.5px;letter-spacing:-0.18px">Closed stirrups - anchorage</div>
<div class="pl" style="left:1380px;top:448.5px;letter-spacing:-0.10px">Measured from</div>
<div class="pl" style="left:1380px;top:472.5px;letter-spacing:0.00px">Spacing [mm]</div>
<div class="pl" style="left:1380px;top:496.5px;letter-spacing:0.00px">α - Stirrup inclination [°]</div>
<div class="pl" style="left:1380px;top:520.5px;letter-spacing:0.00px">Mandrel diameter</div>
<div class="pl" style="left:1380px;top:544.5px;letter-spacing:-0.15px">Concrete cover type</div>
<div class="abs" style="left:1537px;top:349px;width:269px;height:20px;background:#fff;border:1px solid #dcdcdc;"></div><div class="pl" style="left:1543px;top:353.2px;color:#000;transform:scaleX(0.89);transform-origin:0 0">8</div>
<div class="abs" style="left:1537px;top:373px;width:269px;height:20px;background:#fff;border:1px solid #dcdcdc;"></div><div class="pl" style="left:1543px;top:376.4px;color:#000;transform:scaleX(0.89);transform-origin:0 0">B 500B</div>
<div class="abs" style="left:1537px;top:445px;width:291px;height:20px;background:#fff;border:1px solid #dcdcdc;"></div><div class="pl" style="left:1543px;top:448.4px;color:#000">From beginning</div>
<div class="abs" style="left:1537px;top:469px;width:291px;height:20px;background:#fff;border:1px solid #dcdcdc;"></div><div class="pl" style="left:1543px;top:473.2px;color:#000;transform:scaleX(0.89);transform-origin:0 0">50 a200</div>
<div class="abs" style="left:1537px;top:493px;width:291px;height:20px;background:#fff;border:1px solid #dcdcdc;border-color:#000"></div><div class="pl" style="left:1543px;top:497.2px;color:#000;transform:scaleX(0.89);transform-origin:0 0">0</div>
<div class="abs" style="left:1537px;top:517px;width:250px;height:20px;background:#fff;border:1px solid #dcdcdc;background:#eee;border-color:#e2e2e2"></div><div class="pl" style="left:1543px;top:521.2px;color:#9a9a9a;transform:scaleX(0.89);transform-origin:0 0">4.00</div>
<div class="abs" style="left:1537px;top:541px;width:291px;height:20px;background:#fff;border:1px solid #dcdcdc;"></div><div class="pl" style="left:1543px;top:544.4px;color:#000;letter-spacing:-0.2px">From Settings</div>
<div class="abs" style="left:1806px;top:349px;width:22px;height:20px;background:#999"><svg width="22" height="20"><path d="M8.5 8L11 4.5L13.5 8ZM8.5 12L11 15.5L13.5 12Z" fill="#fff"/></svg></div>
<div class="abs" style="left:1806px;top:373px;width:22px;height:20px;background:#999"><svg width="22" height="20"><path d="M3.5 10H18.5M11 2.5V17.5" stroke="#fff" stroke-width="3"/></svg></div>
<div class="abs" style="left:1806px;top:517px;width:22px;height:20px;background:#fff;border:1px solid #bbb"><svg width="22" height="20" style="position:absolute;left:-1px;top:-1px"><path d="M6 15.5L7.5 11.5L16 3L18.5 5.5L10 14Z" fill="#2b6cb8"/><path d="M6 15.5L7.5 11.5L10 14Z" fill="#e8c9a0"/><path d="M5.5 16L6.7 13.6L8 15Z" fill="#222"/></svg></div>
<div class="pl" style="left:1792px;top:519px;font-size:11px">Φ</div>
<svg class="abs" style="left:1790px;top:379px" width="11" height="8"><path d="M1 1.5L5.5 6L10 1.5" stroke="#222" stroke-width="1.2" fill="none"/></svg>
<svg class="abs" style="left:1812px;top:451px" width="11" height="8"><path d="M1 1.5L5.5 6L10 1.5" stroke="#222" stroke-width="1.2" fill="none"/></svg>
<svg class="abs" style="left:1812px;top:547px" width="11" height="8"><path d="M1 1.5L5.5 6L10 1.5" stroke="#222" stroke-width="1.2" fill="none"/></svg>
<svg class="abs" style="left:1530px;top:393px" width="160" height="52" viewBox="1530 393 160 52">
<rect x="1536.5" y="397.5" width="23.1" height="19.3" fill="#fff" stroke="#b8b8b8" stroke-width="1"/>
<rect x="1559.6" y="397.5" width="23.1" height="19.3" fill="#f37021" stroke="#b8b8b8" stroke-width="1"/>
<rect x="1582.7" y="397.5" width="23.1" height="19.3" fill="#fff" stroke="#b8b8b8" stroke-width="1"/>
<rect x="1605.8" y="397.5" width="23.1" height="19.3" fill="#fff" stroke="#b8b8b8" stroke-width="1"/>
<rect x="1628.9" y="397.5" width="23.1" height="19.3" fill="#fff" stroke="#b8b8b8" stroke-width="1"/>
<rect x="1559.6" y="397" width="23.4" height="20" fill="#f37021"/>
<path d="M1548.9 399.3V414.9" stroke="#000" stroke-width="2"/>
<rect x="1567.4" y="400.3" width="9.5" height="13.6" fill="none" stroke="#000" stroke-width="2"/>
<rect x="1590" y="400.3" width="10" height="13.6" fill="none" stroke="#000" stroke-width="2"/><path d="M1595 400V414" stroke="#000" stroke-width="2"/>
<rect x="1611.1" y="400.3" width="13.7" height="13.6" fill="none" stroke="#000" stroke-width="2"/><path d="M1615.4 400V414M1620.6 400V414" stroke="#000" stroke-width="2"/>
<rect x="1634" y="400.3" width="14" height="13.6" fill="none" stroke="#000" stroke-width="2"/><path d="M1638.2 400V414M1641 400V414M1643.8 400V414" stroke="#000" stroke-width="1.7"/>
<rect x="1537.2" y="421.7" width="19.3" height="18.8" fill="#fff" stroke="#b8b8b8" stroke-width="1"/>
<rect x="1557.2" y="421.7" width="19.3" height="18.8" fill="#fff" stroke="#b8b8b8" stroke-width="1"/>
<rect x="1577.2" y="421.7" width="19.3" height="18.8" fill="#fff" stroke="#b8b8b8" stroke-width="1"/>
<rect x="1597.2" y="421.7" width="19.3" height="18.8" fill="#fff" stroke="#b8b8b8" stroke-width="1"/>
<rect x="1617.2" y="421.7" width="19.3" height="18.8" fill="#fff" stroke="#b8b8b8" stroke-width="1"/>
<rect x="1637.2" y="421.7" width="19.3" height="18.8" fill="#fff" stroke="#b8b8b8" stroke-width="1"/>
<rect x="1657.2" y="421.7" width="19.3" height="18.8" fill="#f37021" stroke="#f37021" stroke-width="1"/>
<path d="M1542.9 438.6V430Q1542.9 423.8 1549 423.8H1552.6" stroke="#000" stroke-width="2" fill="none"/>
<path d="M1562.9 438.6V430Q1562.9 424 1566.5 424Q1569 424.5 1570 429.8" stroke="#000" stroke-width="2" fill="none"/><circle cx="1565.6" cy="427.3" r="1" fill="#000"/>
<path d="M1582.8 438.6V431Q1582.8 424.3 1589 423.8" stroke="#000" stroke-width="2" fill="none"/>
<path d="M1602.7 422.9V438.6" stroke="#000" stroke-width="2" fill="none"/><circle cx="1606.2" cy="426.1" r="1.8" fill="#000"/><circle cx="1606.2" cy="432.6" r="1.8" fill="#000"/>
<path d="M1622.8 422.9V438.6" stroke="#000" stroke-width="2" fill="none"/><circle cx="1626" cy="428.4" r="2" fill="#000"/>
<rect x="1643.3" y="423.2" width="7.3" height="6.6" fill="#d2d2d2"/><path d="M1642.5 423.4V430.3M1651.1 423.4V430.3M1641.8 430.3H1651.8M1646.8 430.3V438.6" stroke="#000" stroke-width="1.6" fill="none"/>
<path d="M1661.2 436.3V428.5Q1661.2 425.7 1664 425.7H1669.7Q1672.5 425.7 1672.5 428.5V432.5" stroke="#222" stroke-width="1.5" fill="none"/><path d="M1664.9 433.5V429.4H1670V436.3" stroke="#333" stroke-width="1.2" fill="none"/>
</svg>
<div class="abs" style="left:1535.4px;top:349.2px;width:159.4px;height:167px;border:4px solid #f00;border-radius:9px"></div>
<div class="abs" style="left:1535.5px;top:321px;font-size:25px;color:#f00;line-height:28px">3</div>
<!--PANEL_END-->
</body>
</html>
